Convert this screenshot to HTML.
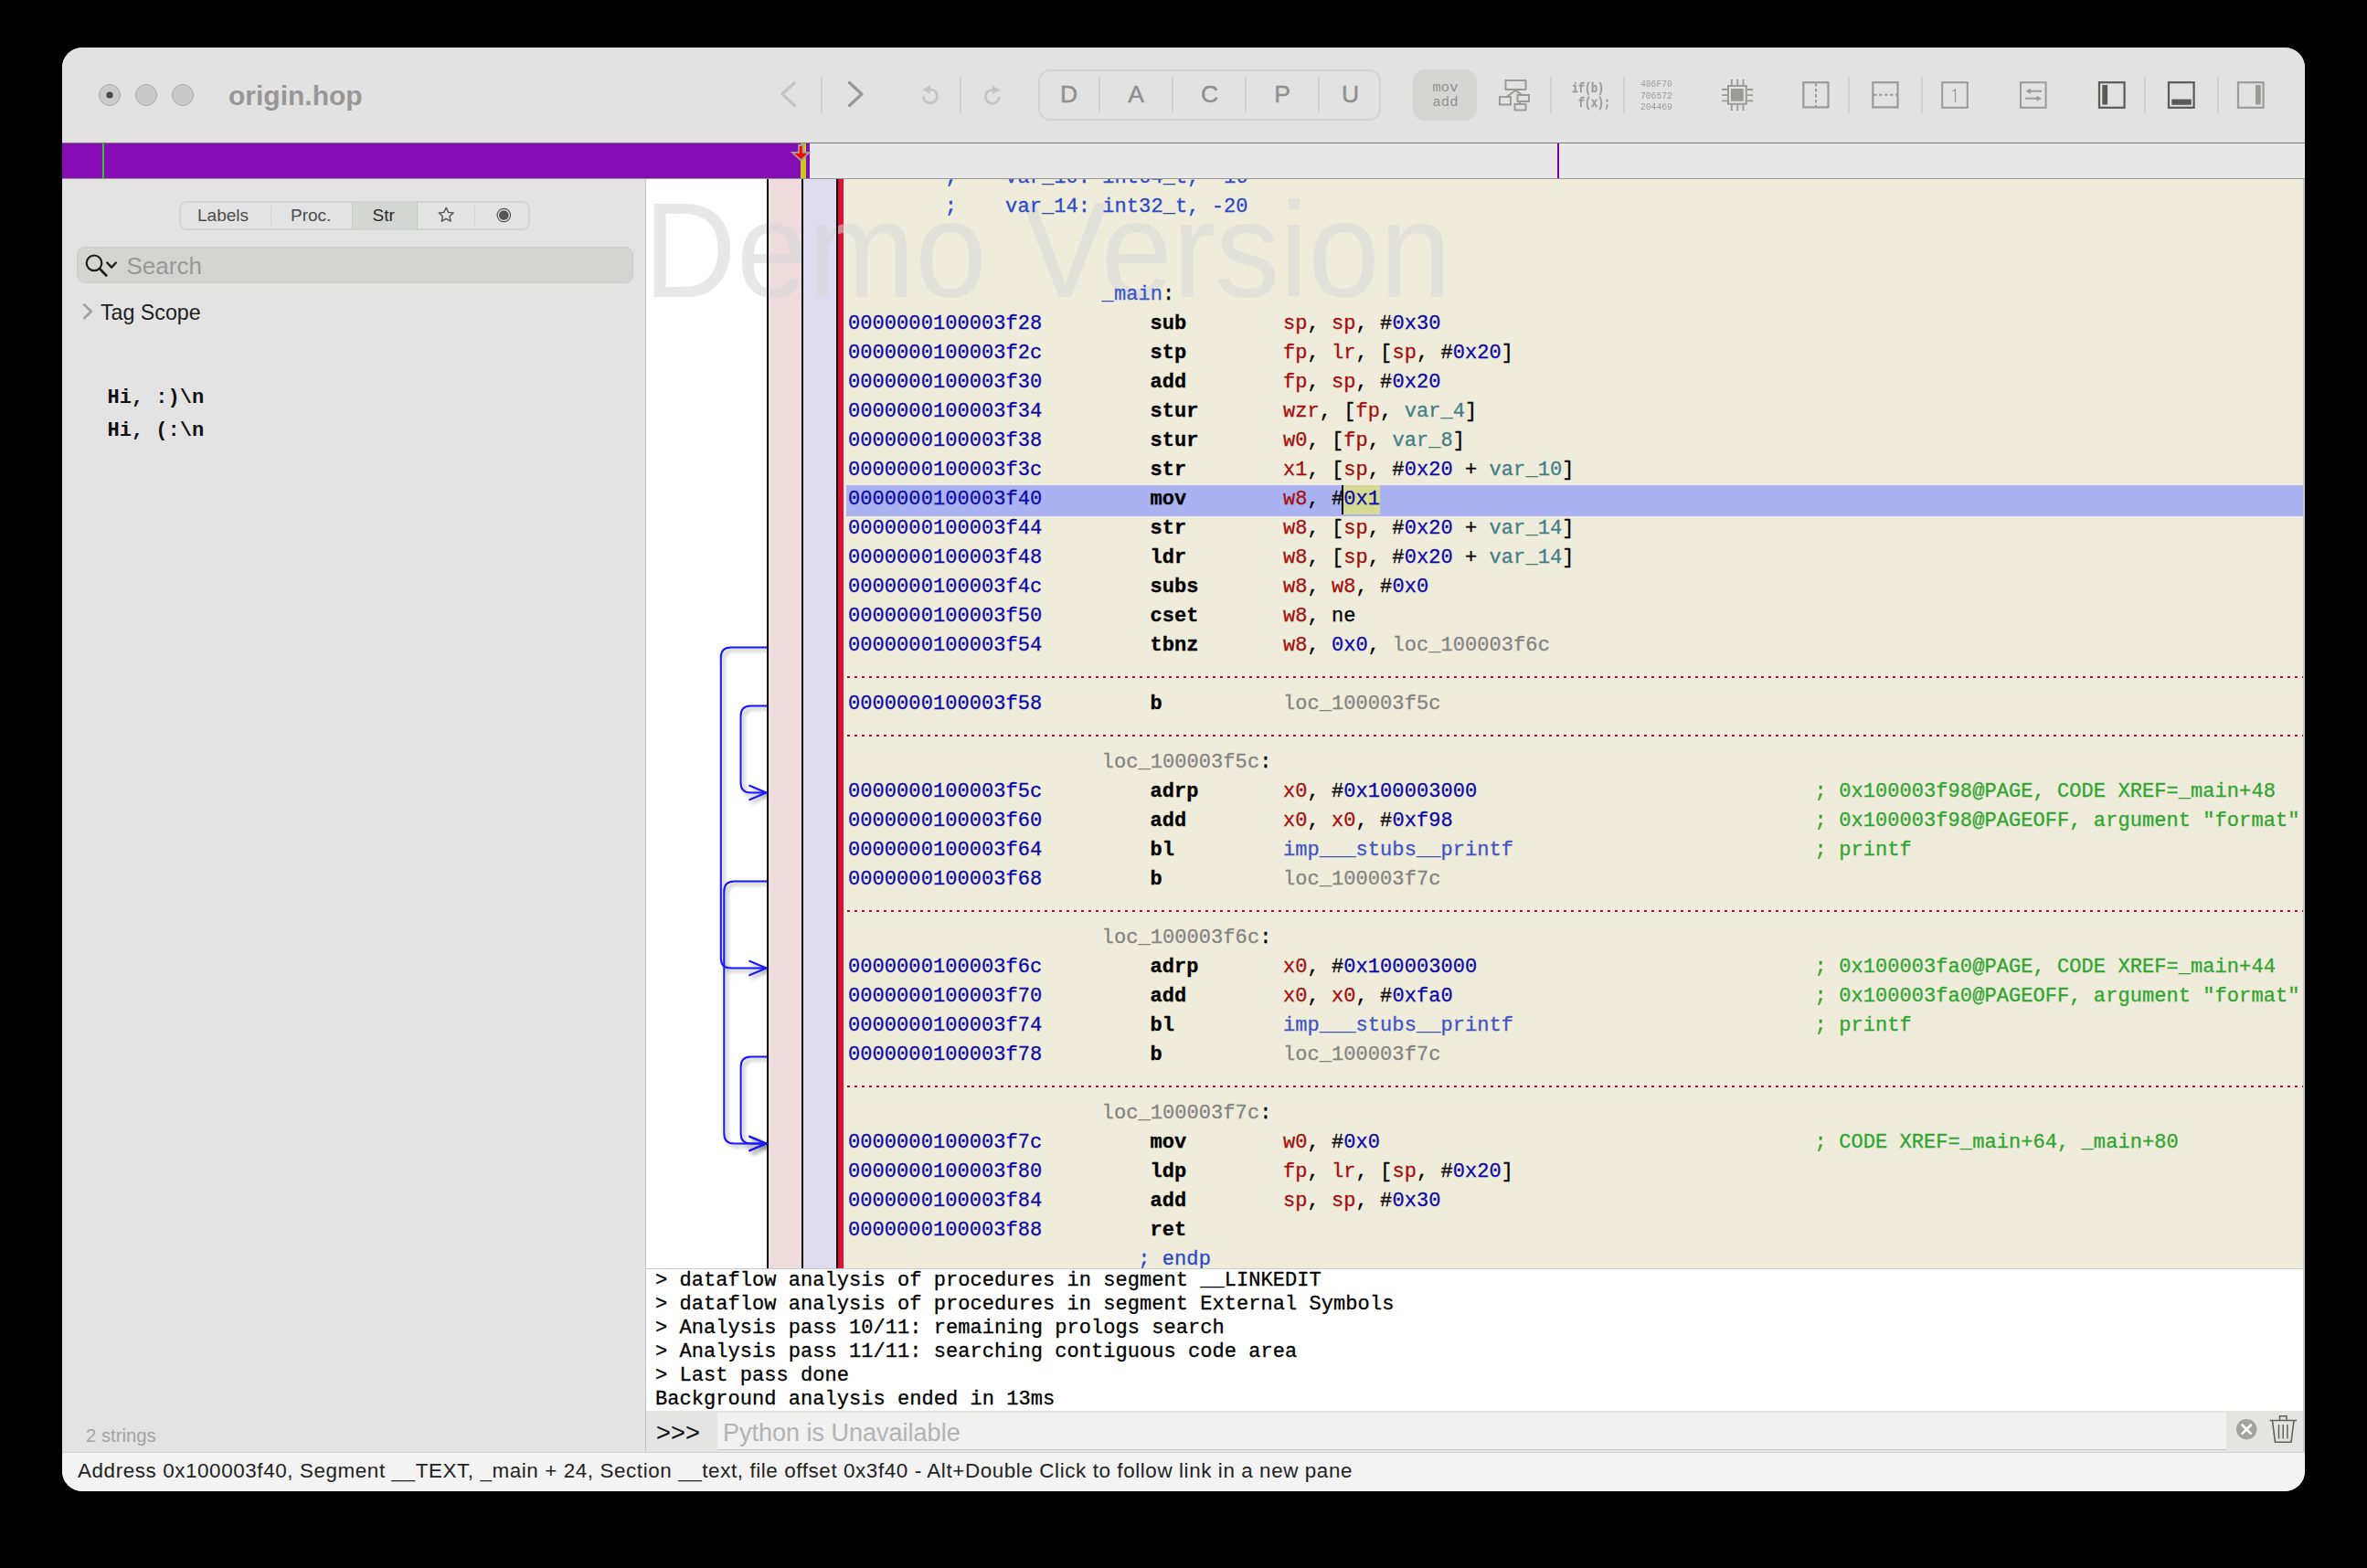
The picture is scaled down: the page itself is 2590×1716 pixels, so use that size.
<!DOCTYPE html><html><head><meta charset="utf-8"><style>
*{margin:0;padding:0;box-sizing:border-box}
html,body{width:2590px;height:1716px;background:#000;overflow:hidden;font-family:"Liberation Sans",sans-serif}
.abs{position:absolute}
#win{position:absolute;left:68px;top:52px;width:2454px;height:1580px;border-radius:22px;overflow:hidden;background:#e3e3e3}
#tb{position:absolute;left:0;top:0;width:2454px;height:105px;background:#e2e2e2;border-bottom:1px solid #767676}
#scrub{position:absolute;left:0;top:105px;width:2454px;height:39px;background:#e8e8e8;border-bottom:1px solid #959595}
#side{position:absolute;left:0;top:144px;width:639px;height:1392px;background:#e3e3e3;border-right:1px solid #c4c4c4}
#code{position:absolute;left:639px;top:144px;width:1814px;height:1193px;background:#efecdc;overflow:hidden;border-bottom:1px solid #c9c9c9}
#gut{position:absolute;left:0;top:0;width:132px;height:1192px;background:#fff}
.cl{position:absolute;white-space:pre;font-family:"Liberation Mono",monospace;font-size:22px;line-height:32px;height:32px;color:#000;letter-spacing:0.07px;-webkit-text-stroke:0.3px currentColor}
.dots{position:absolute;left:4px;right:0;height:2px;background-image:linear-gradient(to right,#9c0f4c 0,#9c0f4c 3px,transparent 3px);background-size:8px 2px}
#con{position:absolute;left:639px;top:1337px;width:1814px;height:155px;background:#fff}
.co{position:absolute;left:10px;white-space:pre;font-family:"Liberation Mono",monospace;font-size:22px;line-height:26px;color:#000;letter-spacing:0.05px;-webkit-text-stroke:0.3px #000}
#inbar{position:absolute;left:639px;top:1492px;width:1814px;height:44px;background:#e4e5e3}
#status{position:absolute;left:0;top:1537px;width:2454px;height:43px;background:#f3f3f3;border-top:1px solid #d2d2d2}
.sep{position:absolute;width:2px;background:#d0d0d0}
.sel{background:#d5d993;box-shadow:-2px 0 0 #000;display:inline-block;height:32px}
</style></head><body>
<div id="win">
<div id="tb">
</div>
<div id="scrub"><div class="abs" style="left:0;top:0;width:818px;height:38px;background:#860db4"></div><div class="abs" style="left:44px;top:0;width:2px;height:38px;background:#36c236"></div><div class="abs" style="left:808px;top:0;width:6px;height:38px;background:#c8c820"></div><div class="abs" style="left:1636px;top:0;width:2px;height:38px;background:#7a00b0"></div></div>
<div id="side">
</div>
<div id="code"><div id="gut"></div>
<div class="abs" style="left:132px;top:0;width:2px;height:1192px;background:#000"></div>
<div class="abs" style="left:134px;top:0;width:36px;height:1192px;background:#eedcdc"></div>
<div class="abs" style="left:170px;top:0;width:2px;height:1192px;background:#000"></div>
<div class="abs" style="left:172px;top:0;width:36px;height:1192px;background:#e0dcf0"></div>
<div class="abs" style="left:208px;top:0;width:2px;height:1192px;background:#000"></div>
<div class="abs" style="left:210px;top:0;width:6px;height:1192px;background:#e00f35"></div>
<div style="position:absolute;left:-3.50px;top:4.19px;font-family:'Liberation Sans',sans-serif;font-size:148px;line-height:1;white-space:pre;color:rgba(214,214,214,0.56);transform:scaleX(0.951);transform-origin:0 0">Demo Version</div>
<div class="abs" style="left:132px;top:0;width:2px;height:1193px;background:#000;opacity:0.9"></div>
<div class="abs" style="left:170px;top:0;width:2px;height:1193px;background:#000;opacity:0.9"></div>
<div class="abs" style="left:208px;top:0;width:2px;height:1193px;background:#000;opacity:0.9"></div>
<div class="abs" style="left:216px;top:0;right:0;bottom:0">
<div class="abs" style="left:3px;right:0;top:335px;height:34px;background:#abb2f1"></div>
<div class="dots" style="top:544px"></div>
<div class="dots" style="top:608px"></div>
<div class="dots" style="top:800px"></div>
<div class="dots" style="top:992px"></div>
<div class="cl" style="top:-17px;left:110.76px"><span style="color:#2a4ac6">;    var_10: int64_t, -16</span></div>
<div class="cl" style="top:15px;left:110.76px"><span style="color:#2a4ac6">;    var_14: int32_t, -20</span></div>
<div class="cl" style="top:111px;left:282.62px"><span style="color:#3a55c8">_main</span>:</div>
<div class="cl" style="top:143px;left:5.00px"><span style="color:#0a0aa6">0000000100003f28</span></div>
<div class="cl" style="top:143px;left:335.50px"><span style="font-weight:bold">sub</span></div>
<div class="cl" style="top:143px;left:480.92px"><span style="color:#a50d0d">sp</span>, <span style="color:#a50d0d">sp</span>, #<span style="color:#0a0aa6">0x30</span></div>
<div class="cl" style="top:175px;left:5.00px"><span style="color:#0a0aa6">0000000100003f2c</span></div>
<div class="cl" style="top:175px;left:335.50px"><span style="font-weight:bold">stp</span></div>
<div class="cl" style="top:175px;left:480.92px"><span style="color:#a50d0d">fp</span>, <span style="color:#a50d0d">lr</span>, [<span style="color:#a50d0d">sp</span>, #<span style="color:#0a0aa6">0x20</span>]</div>
<div class="cl" style="top:207px;left:5.00px"><span style="color:#0a0aa6">0000000100003f30</span></div>
<div class="cl" style="top:207px;left:335.50px"><span style="font-weight:bold">add</span></div>
<div class="cl" style="top:207px;left:480.92px"><span style="color:#a50d0d">fp</span>, <span style="color:#a50d0d">sp</span>, #<span style="color:#0a0aa6">0x20</span></div>
<div class="cl" style="top:239px;left:5.00px"><span style="color:#0a0aa6">0000000100003f34</span></div>
<div class="cl" style="top:239px;left:335.50px"><span style="font-weight:bold">stur</span></div>
<div class="cl" style="top:239px;left:480.92px"><span style="color:#a50d0d">wzr</span>, [<span style="color:#a50d0d">fp</span>, <span style="color:#417e86">var_4</span>]</div>
<div class="cl" style="top:271px;left:5.00px"><span style="color:#0a0aa6">0000000100003f38</span></div>
<div class="cl" style="top:271px;left:335.50px"><span style="font-weight:bold">stur</span></div>
<div class="cl" style="top:271px;left:480.92px"><span style="color:#a50d0d">w0</span>, [<span style="color:#a50d0d">fp</span>, <span style="color:#417e86">var_8</span>]</div>
<div class="cl" style="top:303px;left:5.00px"><span style="color:#0a0aa6">0000000100003f3c</span></div>
<div class="cl" style="top:303px;left:335.50px"><span style="font-weight:bold">str</span></div>
<div class="cl" style="top:303px;left:480.92px"><span style="color:#a50d0d">x1</span>, [<span style="color:#a50d0d">sp</span>, #<span style="color:#0a0aa6">0x20</span> + <span style="color:#417e86">var_10</span>]</div>
<div class="cl" style="top:335px;left:5.00px"><span style="color:#0a0aa6">0000000100003f40</span></div>
<div class="cl" style="top:335px;left:335.50px"><span style="font-weight:bold">mov</span></div>
<div class="cl" style="top:335px;left:480.92px"><span style="color:#a50d0d">w8</span>, #<span class="sel"><span style="color:#0a0aa6">0x1</span></span></div>
<div class="cl" style="top:367px;left:5.00px"><span style="color:#0a0aa6">0000000100003f44</span></div>
<div class="cl" style="top:367px;left:335.50px"><span style="font-weight:bold">str</span></div>
<div class="cl" style="top:367px;left:480.92px"><span style="color:#a50d0d">w8</span>, [<span style="color:#a50d0d">sp</span>, #<span style="color:#0a0aa6">0x20</span> + <span style="color:#417e86">var_14</span>]</div>
<div class="cl" style="top:399px;left:5.00px"><span style="color:#0a0aa6">0000000100003f48</span></div>
<div class="cl" style="top:399px;left:335.50px"><span style="font-weight:bold">ldr</span></div>
<div class="cl" style="top:399px;left:480.92px"><span style="color:#a50d0d">w8</span>, [<span style="color:#a50d0d">sp</span>, #<span style="color:#0a0aa6">0x20</span> + <span style="color:#417e86">var_14</span>]</div>
<div class="cl" style="top:431px;left:5.00px"><span style="color:#0a0aa6">0000000100003f4c</span></div>
<div class="cl" style="top:431px;left:335.50px"><span style="font-weight:bold">subs</span></div>
<div class="cl" style="top:431px;left:480.92px"><span style="color:#a50d0d">w8</span>, <span style="color:#a50d0d">w8</span>, #<span style="color:#0a0aa6">0x0</span></div>
<div class="cl" style="top:463px;left:5.00px"><span style="color:#0a0aa6">0000000100003f50</span></div>
<div class="cl" style="top:463px;left:335.50px"><span style="font-weight:bold">cset</span></div>
<div class="cl" style="top:463px;left:480.92px"><span style="color:#a50d0d">w8</span>, ne</div>
<div class="cl" style="top:495px;left:5.00px"><span style="color:#0a0aa6">0000000100003f54</span></div>
<div class="cl" style="top:495px;left:335.50px"><span style="font-weight:bold">tbnz</span></div>
<div class="cl" style="top:495px;left:480.92px"><span style="color:#a50d0d">w8</span>, <span style="color:#0a0aa6">0x0</span>, <span style="color:#838383">loc_100003f6c</span></div>
<div class="cl" style="top:559px;left:5.00px"><span style="color:#0a0aa6">0000000100003f58</span></div>
<div class="cl" style="top:559px;left:335.50px"><span style="font-weight:bold">b</span></div>
<div class="cl" style="top:559px;left:480.92px"><span style="color:#838383">loc_100003f5c</span></div>
<div class="cl" style="top:623px;left:282.62px"><span style="color:#838383">loc_100003f5c</span>:</div>
<div class="cl" style="top:655px;left:5.00px"><span style="color:#0a0aa6">0000000100003f5c</span></div>
<div class="cl" style="top:655px;left:335.50px"><span style="font-weight:bold">adrp</span></div>
<div class="cl" style="top:655px;left:480.92px"><span style="color:#a50d0d">x0</span>, #<span style="color:#0a0aa6">0x100003000</span></div>
<div class="cl" style="top:655px;left:1062.60px"><span style="color:#2fa52f">; 0x100003f98@PAGE, CODE XREF=_main+48</span></div>
<div class="cl" style="top:687px;left:5.00px"><span style="color:#0a0aa6">0000000100003f60</span></div>
<div class="cl" style="top:687px;left:335.50px"><span style="font-weight:bold">add</span></div>
<div class="cl" style="top:687px;left:480.92px"><span style="color:#a50d0d">x0</span>, <span style="color:#a50d0d">x0</span>, #<span style="color:#0a0aa6">0xf98</span></div>
<div class="cl" style="top:687px;left:1062.60px"><span style="color:#2fa52f">; 0x100003f98@PAGEOFF, argument &quot;format&quot;</span></div>
<div class="cl" style="top:719px;left:5.00px"><span style="color:#0a0aa6">0000000100003f64</span></div>
<div class="cl" style="top:719px;left:335.50px"><span style="font-weight:bold">bl</span></div>
<div class="cl" style="top:719px;left:480.92px"><span style="color:#3f55c3">imp___stubs__printf</span></div>
<div class="cl" style="top:719px;left:1062.60px"><span style="color:#2fa52f">; printf</span></div>
<div class="cl" style="top:751px;left:5.00px"><span style="color:#0a0aa6">0000000100003f68</span></div>
<div class="cl" style="top:751px;left:335.50px"><span style="font-weight:bold">b</span></div>
<div class="cl" style="top:751px;left:480.92px"><span style="color:#838383">loc_100003f7c</span></div>
<div class="cl" style="top:815px;left:282.62px"><span style="color:#838383">loc_100003f6c</span>:</div>
<div class="cl" style="top:847px;left:5.00px"><span style="color:#0a0aa6">0000000100003f6c</span></div>
<div class="cl" style="top:847px;left:335.50px"><span style="font-weight:bold">adrp</span></div>
<div class="cl" style="top:847px;left:480.92px"><span style="color:#a50d0d">x0</span>, #<span style="color:#0a0aa6">0x100003000</span></div>
<div class="cl" style="top:847px;left:1062.60px"><span style="color:#2fa52f">; 0x100003fa0@PAGE, CODE XREF=_main+44</span></div>
<div class="cl" style="top:879px;left:5.00px"><span style="color:#0a0aa6">0000000100003f70</span></div>
<div class="cl" style="top:879px;left:335.50px"><span style="font-weight:bold">add</span></div>
<div class="cl" style="top:879px;left:480.92px"><span style="color:#a50d0d">x0</span>, <span style="color:#a50d0d">x0</span>, #<span style="color:#0a0aa6">0xfa0</span></div>
<div class="cl" style="top:879px;left:1062.60px"><span style="color:#2fa52f">; 0x100003fa0@PAGEOFF, argument &quot;format&quot;</span></div>
<div class="cl" style="top:911px;left:5.00px"><span style="color:#0a0aa6">0000000100003f74</span></div>
<div class="cl" style="top:911px;left:335.50px"><span style="font-weight:bold">bl</span></div>
<div class="cl" style="top:911px;left:480.92px"><span style="color:#3f55c3">imp___stubs__printf</span></div>
<div class="cl" style="top:911px;left:1062.60px"><span style="color:#2fa52f">; printf</span></div>
<div class="cl" style="top:943px;left:5.00px"><span style="color:#0a0aa6">0000000100003f78</span></div>
<div class="cl" style="top:943px;left:335.50px"><span style="font-weight:bold">b</span></div>
<div class="cl" style="top:943px;left:480.92px"><span style="color:#838383">loc_100003f7c</span></div>
<div class="cl" style="top:1007px;left:282.62px"><span style="color:#838383">loc_100003f7c</span>:</div>
<div class="cl" style="top:1039px;left:5.00px"><span style="color:#0a0aa6">0000000100003f7c</span></div>
<div class="cl" style="top:1039px;left:335.50px"><span style="font-weight:bold">mov</span></div>
<div class="cl" style="top:1039px;left:480.92px"><span style="color:#a50d0d">w0</span>, #<span style="color:#0a0aa6">0x0</span></div>
<div class="cl" style="top:1039px;left:1062.60px"><span style="color:#2fa52f">; CODE XREF=_main+64, _main+80</span></div>
<div class="cl" style="top:1071px;left:5.00px"><span style="color:#0a0aa6">0000000100003f80</span></div>
<div class="cl" style="top:1071px;left:335.50px"><span style="font-weight:bold">ldp</span></div>
<div class="cl" style="top:1071px;left:480.92px"><span style="color:#a50d0d">fp</span>, <span style="color:#a50d0d">lr</span>, [<span style="color:#a50d0d">sp</span>, #<span style="color:#0a0aa6">0x20</span>]</div>
<div class="cl" style="top:1103px;left:5.00px"><span style="color:#0a0aa6">0000000100003f84</span></div>
<div class="cl" style="top:1103px;left:335.50px"><span style="font-weight:bold">add</span></div>
<div class="cl" style="top:1103px;left:480.92px"><span style="color:#a50d0d">sp</span>, <span style="color:#a50d0d">sp</span>, #<span style="color:#0a0aa6">0x30</span></div>
<div class="cl" style="top:1135px;left:5.00px"><span style="color:#0a0aa6">0000000100003f88</span></div>
<div class="cl" style="top:1135px;left:335.50px"><span style="font-weight:bold">ret</span></div>
<div class="cl" style="top:1167px;left:322.28px"><span style="color:#2a4ac6">; endp</span></div>
</div>
</div>
<div id="con">
<div class="co" style="top:0px">&gt; dataflow analysis of procedures in segment __LINKEDIT</div>
<div class="co" style="top:26px">&gt; dataflow analysis of procedures in segment External Symbols</div>
<div class="co" style="top:52px">&gt; Analysis pass 10/11: remaining prologs search</div>
<div class="co" style="top:78px">&gt; Analysis pass 11/11: searching contiguous code area</div>
<div class="co" style="top:104px">&gt; Last pass done</div>
<div class="co" style="top:130px">Background analysis ended in 13ms</div>
</div>
<div id="inbar"></div>
<div id="status"></div>
<svg style="position:absolute;left:39.00px;top:39.00px;" width="26.00" height="26.00" viewBox="107.00 91.00 26.00 26.00"><circle cx="120" cy="104" r="11.6" fill="#c9c9c9" stroke="#a9a9a9" stroke-width="1"/><circle cx="120" cy="104" r="3.6" fill="#454545"/></svg>
<svg style="position:absolute;left:79.00px;top:39.00px;" width="26.00" height="26.00" viewBox="147.00 91.00 26.00 26.00"><circle cx="160" cy="104" r="11.6" fill="#c9c9c9" stroke="#a9a9a9" stroke-width="1"/></svg>
<svg style="position:absolute;left:119.00px;top:39.00px;" width="26.00" height="26.00" viewBox="187.00 91.00 26.00 26.00"><circle cx="200" cy="104" r="11.6" fill="#c9c9c9" stroke="#a9a9a9" stroke-width="1"/></svg>
<div style="position:absolute;left:182.00px;top:37.60px;font-family:'Liberation Sans',sans-serif;font-size:30.00px;line-height:1;white-space:pre;color:#979797;font-weight:bold;">origin.hop</div>
<svg style="position:absolute;left:777.00px;top:28.00px;" width="35.00" height="46.00" viewBox="845.00 80.00 35.00 46.00"><polyline points="869.5,90.5 856,103 869.5,115.5" fill="none" stroke="#c5c5c5" stroke-width="3.3" stroke-linecap="round" stroke-linejoin="round"/></svg>
<svg style="position:absolute;left:850.00px;top:28.00px;" width="37.00" height="46.00" viewBox="918.00 80.00 37.00 46.00"><polyline points="929.5,90.5 943,103 929.5,115.5" fill="none" stroke="#979996" stroke-width="3.3" stroke-linecap="round" stroke-linejoin="round"/></svg>
<div style="position:absolute;left:830.25px;top:32.00px;width:1.50px;height:40.00px;background:#d2d2d2"></div>
<div style="position:absolute;left:982.25px;top:32.00px;width:1.50px;height:40.00px;background:#d2d2d2"></div>
<div style="position:absolute;left:1628.25px;top:32.00px;width:1.50px;height:40.00px;background:#d2d2d2"></div>
<div style="position:absolute;left:1708.25px;top:32.00px;width:1.50px;height:40.00px;background:#d2d2d2"></div>
<div style="position:absolute;left:1954.25px;top:32.00px;width:1.50px;height:40.00px;background:#d2d2d2"></div>
<div style="position:absolute;left:2034.25px;top:32.00px;width:1.50px;height:40.00px;background:#d2d2d2"></div>
<div style="position:absolute;left:2278.25px;top:32.00px;width:1.50px;height:40.00px;background:#d2d2d2"></div>
<div style="position:absolute;left:2358.25px;top:32.00px;width:1.50px;height:40.00px;background:#d2d2d2"></div>
<svg style="position:absolute;left:932.00px;top:34.00px;" width="36.00" height="38.00" viewBox="1000.00 86.00 36.00 38.00"><path d="M1010.4,105.3 A7.5,7.5 0 1 0 1017.9,97.9" fill="none" stroke="#c5c5c5" stroke-width="2.8"/><path d="M1009.6,97.9 L1017.9,93 L1017.9,102.8 Z" fill="#c5c5c5"/></svg>
<svg style="position:absolute;left:1000.00px;top:34.00px;" width="36.00" height="38.00" viewBox="1068.00 86.00 36.00 38.00"><path d="M1093.3,105.8 A7.5,7.5 0 1 1 1085.8,98.4" fill="none" stroke="#c5c5c5" stroke-width="2.8"/><path d="M1094.2,98.4 L1085.8,93.6 L1085.8,103.2 Z" fill="#c5c5c5"/></svg>
<div style="position:absolute;left:1068.00px;top:24.00px;width:375.00px;height:55.50px;border:2px solid #d3d4d2;border-radius:13px;box-sizing:border-box"></div>
<div style="position:absolute;left:1134.25px;top:32.00px;width:1.50px;height:39.00px;background:#d2d3d1"></div>
<div style="position:absolute;left:1214.25px;top:32.00px;width:1.50px;height:39.00px;background:#d2d3d1"></div>
<div style="position:absolute;left:1294.25px;top:32.00px;width:1.50px;height:39.00px;background:#d2d3d1"></div>
<div style="position:absolute;left:1374.25px;top:32.00px;width:1.50px;height:39.00px;background:#d2d3d1"></div>
<div style="position:absolute;left:1071.50px;top:37.76px;width:60px;text-align:center;font-family:'Liberation Sans',sans-serif;font-size:26.5px;line-height:1;color:#8f908e;-webkit-text-stroke:0.45px #8f908e">D</div>
<div style="position:absolute;left:1145.00px;top:37.76px;width:60px;text-align:center;font-family:'Liberation Sans',sans-serif;font-size:26.5px;line-height:1;color:#8f908e;-webkit-text-stroke:0.45px #8f908e">A</div>
<div style="position:absolute;left:1225.50px;top:37.76px;width:60px;text-align:center;font-family:'Liberation Sans',sans-serif;font-size:26.5px;line-height:1;color:#8f908e;-webkit-text-stroke:0.45px #8f908e">C</div>
<div style="position:absolute;left:1305.00px;top:37.76px;width:60px;text-align:center;font-family:'Liberation Sans',sans-serif;font-size:26.5px;line-height:1;color:#8f908e;-webkit-text-stroke:0.45px #8f908e">P</div>
<div style="position:absolute;left:1379.50px;top:37.76px;width:60px;text-align:center;font-family:'Liberation Sans',sans-serif;font-size:26.5px;line-height:1;color:#8f908e;-webkit-text-stroke:0.45px #8f908e">U</div>
<div style="position:absolute;left:1478.00px;top:24.00px;width:70.00px;height:55.50px;background:#d5d6d4;border-radius:13px"></div>
<div style="position:absolute;left:1478.50px;top:36.00px;width:70px;text-align:center;font-family:'Liberation Mono',monospace;font-size:15.5px;line-height:16px;color:#8f908e">mov<br>add</div>
<svg style="position:absolute;left:1568.00px;top:30.00px;" width="44.00" height="42.00" viewBox="1636.00 82.00 44.00 42.00"><rect x="1647.5" y="88" width="22" height="10" fill="none" stroke="#9a9b99" stroke-width="2"/><rect x="1641" y="106" width="12" height="8.5" fill="none" stroke="#9a9b99" stroke-width="2"/><rect x="1660.5" y="104" width="12.5" height="7" fill="none" stroke="#9a9b99" stroke-width="2"/><rect x="1657.5" y="114" width="12" height="6.5" fill="none" stroke="#9a9b99" stroke-width="2"/><polyline points="1648.5,106 1658,99 1666,104" fill="none" stroke="#9a9b99" stroke-width="2"/><line x1="1663" y1="111" x2="1663" y2="114" stroke="#9a9b99" stroke-width="2"/></svg>
<div style="position:absolute;left:1651.50px;top:38.00px;font-family:'Liberation Mono',monospace;font-weight:bold;font-size:15px;line-height:15.5px;color:#9a9b99;white-space:pre;-webkit-text-stroke:0.35px #9a9b99;transform:scaleX(0.78);transform-origin:0 0">if(b)<br> f(x);</div>
<div style="position:absolute;left:1727.00px;top:34.20px;font-family:'Liberation Mono',monospace;font-size:11px;line-height:12.4px;color:#9c9d9b;white-space:pre;transform:scaleX(0.88);transform-origin:0 0">486F70<br>706572<br>204469</div>
<svg style="position:absolute;left:1812.00px;top:32.00px;" width="42.00" height="40.00" viewBox="1880.00 84.00 42.00 40.00"><rect x="1891" y="94" width="19.8" height="19.8" fill="none" stroke="#9a9b99" stroke-width="2"/><rect x="1894" y="97" width="13.8" height="13.8" fill="#9a9b99"/><line x1="1894.8" y1="86.8" x2="1894.8" y2="93" stroke="#9a9b99" stroke-width="1.8"/><line x1="1894.8" y1="115" x2="1894.8" y2="121" stroke="#9a9b99" stroke-width="1.8"/><line x1="1901.2" y1="86.8" x2="1901.2" y2="93" stroke="#9a9b99" stroke-width="1.8"/><line x1="1901.2" y1="115" x2="1901.2" y2="121" stroke="#9a9b99" stroke-width="1.8"/><line x1="1907.5" y1="86.8" x2="1907.5" y2="93" stroke="#9a9b99" stroke-width="1.8"/><line x1="1907.5" y1="115" x2="1907.5" y2="121" stroke="#9a9b99" stroke-width="1.8"/><line y1="98.0" x1="1884" y2="98.0" x2="1891" stroke="#9a9b99" stroke-width="1.8"/><line y1="98.0" x1="1912" y2="98.0" x2="1918" stroke="#9a9b99" stroke-width="1.8"/><line y1="104.2" x1="1884" y2="104.2" x2="1891" stroke="#9a9b99" stroke-width="1.8"/><line y1="104.2" x1="1912" y2="104.2" x2="1918" stroke="#9a9b99" stroke-width="1.8"/><line y1="110.4" x1="1884" y2="110.4" x2="1891" stroke="#9a9b99" stroke-width="1.8"/><line y1="110.4" x1="1912" y2="110.4" x2="1918" stroke="#9a9b99" stroke-width="1.8"/></svg>
<svg style="position:absolute;left:1900.00px;top:33.00px;" width="38.00" height="37.00" viewBox="1968.00 85.00 38.00 37.00"><rect x="1973.3" y="90.2" width="27.2" height="27.2" fill="none" stroke="#9a9b99" stroke-width="2.2"/><line x1="1987" y1="91" x2="1987" y2="117" stroke="#9a9b99" stroke-width="2" stroke-dasharray="3.5,2.5"/></svg>
<svg style="position:absolute;left:1976.00px;top:33.00px;" width="38.00" height="37.00" viewBox="2044.00 85.00 38.00 37.00"><rect x="2049.3" y="90.2" width="27.2" height="27.2" fill="none" stroke="#9a9b99" stroke-width="2.2"/><line x1="2050" y1="103.7" x2="2076" y2="103.7" stroke="#9a9b99" stroke-width="2" stroke-dasharray="3.5,2.5"/></svg>
<svg style="position:absolute;left:2052.00px;top:33.00px;" width="38.00" height="38.00" viewBox="2120.00 85.00 38.00 38.00"><rect x="2125.2" y="90.2" width="27.6" height="27.6" fill="none" stroke="#9a9b99" stroke-width="2"/><path d="M2136.5,100 L2139.5,98 L2139.5,112" fill="none" stroke="#9a9b99" stroke-width="1.3"/></svg>
<svg style="position:absolute;left:2138.00px;top:33.00px;" width="38.00" height="38.00" viewBox="2206.00 85.00 38.00 38.00"><rect x="2211" y="90.2" width="27.6" height="27.6" fill="none" stroke="#9a9b99" stroke-width="2"/><line x1="2219" y1="99.7" x2="2234" y2="99.7" stroke="#9a9b99" stroke-width="2"/><path d="M2216.5,99.7 L2222,96.7 L2222,102.7 Z" fill="#9a9b99"/><line x1="2216" y1="107.7" x2="2231" y2="107.7" stroke="#9a9b99" stroke-width="2"/><path d="M2234,107.7 L2228.5,104.7 L2228.5,110.7 Z" fill="#9a9b99"/></svg>
<svg style="position:absolute;left:2224.00px;top:33.00px;" width="38.00" height="38.00" viewBox="2292.00 85.00 38.00 38.00"><rect x="2297" y="90.2" width="27.6" height="27.6" fill="none" stroke="#5a5b59" stroke-width="2.2"/><rect x="2300.3" y="93" width="5.8" height="21.5" fill="#5a5b59"/></svg>
<svg style="position:absolute;left:2300.00px;top:33.00px;" width="38.00" height="38.00" viewBox="2368.00 85.00 38.00 38.00"><rect x="2373" y="90.2" width="27.6" height="27.6" fill="none" stroke="#5a5b59" stroke-width="2.2"/><rect x="2376.3" y="108.6" width="21.5" height="6.2" fill="#5a5b59"/></svg>
<svg style="position:absolute;left:2376.00px;top:33.00px;" width="38.00" height="38.00" viewBox="2444.00 85.00 38.00 38.00"><rect x="2449" y="90.2" width="27.6" height="27.6" fill="none" stroke="#9a9b99" stroke-width="2.2"/><rect x="2468" y="93" width="5.8" height="21.5" fill="#9a9b99"/></svg>
<div style="position:absolute;left:127.50px;top:168.00px;width:384.50px;height:32.00px;border:2px solid #d3d5d3;border-radius:8px;box-sizing:border-box"></div>
<div style="position:absolute;left:316.50px;top:168.00px;width:72.50px;height:32.00px;background:#d4d6d4;border-left:1.5px solid #c8cac8;border-right:1.5px solid #c8cac8;box-sizing:border-box"></div>
<div style="position:absolute;left:227.60px;top:174.00px;width:1.40px;height:20.00px;background:#d3d4d2"></div>
<div style="position:absolute;left:451.10px;top:174.00px;width:1.40px;height:20.00px;background:#d3d4d2"></div>
<div style="position:absolute;left:148.00px;top:173.91px;font-family:'Liberation Sans',sans-serif;font-size:19.00px;line-height:1;white-space:pre;color:#4c4c4c;font-weight:normal;">Labels</div>
<div style="position:absolute;left:250.00px;top:173.91px;font-family:'Liberation Sans',sans-serif;font-size:19.00px;line-height:1;white-space:pre;color:#4c4c4c;font-weight:normal;">Proc.</div>
<div style="position:absolute;left:339.50px;top:173.91px;font-family:'Liberation Sans',sans-serif;font-size:19.00px;line-height:1;white-space:pre;color:#2a2a2a;font-weight:normal;">Str</div>
<svg style="position:absolute;left:408.00px;top:171.00px;" width="24.00" height="25.00" viewBox="476.00 223.00 24.00 25.00"><path d="M488.2,227.3 L490.6,232.4 L496.1,233 L492,236.7 L493.1,242.1 L488.2,239.4 L483.3,242.1 L484.4,236.7 L480.3,233 L485.8,232.4 Z" fill="none" stroke="#555" stroke-width="1.4" stroke-linejoin="round"/></svg>
<svg style="position:absolute;left:472.00px;top:172.00px;" width="23.00" height="23.00" viewBox="540.00 224.00 23.00 23.00"><circle cx="551.3" cy="235.5" r="7.2" fill="none" stroke="#555" stroke-width="1.2"/><circle cx="551.3" cy="235.5" r="5.3" fill="#555"/></svg>
<div style="position:absolute;left:16.30px;top:218.30px;width:608.70px;height:39.40px;background:#d4d5d3;border-radius:9px;border:1px solid #cbccca;box-sizing:border-box"></div>
<svg style="position:absolute;left:20.00px;top:222.00px;" width="44.00" height="34.00" viewBox="88.00 274.00 44.00 34.00"><circle cx="103" cy="287.8" r="8.3" fill="none" stroke="#1c1c1c" stroke-width="2.2"/><line x1="109" y1="294" x2="116.3" y2="301.5" stroke="#1c1c1c" stroke-width="2.6" stroke-linecap="round"/><polyline points="117.3,287.5 122,292.6 126.9,287.5" fill="none" stroke="#1c1c1c" stroke-width="2.3" stroke-linecap="round" stroke-linejoin="round"/></svg>
<div style="position:absolute;left:70.50px;top:226.49px;font-family:'Liberation Sans',sans-serif;font-size:26.00px;line-height:1;white-space:pre;color:#989898;font-weight:normal;">Search</div>
<svg style="position:absolute;left:18.00px;top:276.00px;" width="20.00" height="25.00" viewBox="86.00 328.00 20.00 25.00"><polyline points="92.3,333.5 99.8,340.7 92.3,348" fill="none" stroke="#a0a39f" stroke-width="2.8" stroke-linecap="round" stroke-linejoin="round"/></svg>
<div style="position:absolute;left:42.00px;top:279.06px;font-family:'Liberation Sans',sans-serif;font-size:23.20px;line-height:1;white-space:pre;color:#1e1e1e;font-weight:normal;">Tag Scope</div>
<div style="position:absolute;left:49.50px;top:373.15px;font-family:'Liberation Mono',monospace;font-size:22.00px;line-height:1;white-space:pre;color:#111;font-weight:bold;">Hi, :)\n</div>
<div style="position:absolute;left:49.50px;top:409.15px;font-family:'Liberation Mono',monospace;font-size:22.00px;line-height:1;white-space:pre;color:#111;font-weight:bold;">Hi, (:\n</div>
<div style="position:absolute;left:26.00px;top:1509.21px;font-family:'Liberation Sans',sans-serif;font-size:20.30px;line-height:1;white-space:pre;color:#a3a3a3;font-weight:normal;">2 strings</div>
<svg style="position:absolute;left:639.00px;top:144.00px;" width="132.50" height="1192.00" viewBox="707.00 196.00 132.50 1192.00"><defs><filter id="sh" x="-50%" y="-20%" width="200%" height="140%"><feGaussianBlur in="SourceAlpha" stdDeviation="2.2"/><feOffset dx="2.5" dy="2.5"/><feComponentTransfer><feFuncA type="linear" slope="0.35"/></feComponentTransfer><feMerge><feMergeNode/><feMergeNode in="SourceGraphic"/></feMerge></filter></defs><g filter="url(#sh)"><path d="M839.0,708.5 L799.8,708.5 Q788.8,708.5 788.8,719.5 L788.8,1048.5 Q788.8,1059.5 799.8,1059.5 L839.0,1059.5" fill="none" stroke="#1515ff" stroke-width="2"/><polyline points="819.5,1051.5 838.5,1059.5 819.5,1067.5" fill="none" stroke="#1515ff" stroke-width="2"/></g><g filter="url(#sh)"><path d="M839.0,772.5 L821.5,772.5 Q810.5,772.5 810.5,783.5 L810.5,856.5 Q810.5,867.5 821.5,867.5 L839.0,867.5" fill="none" stroke="#1515ff" stroke-width="2"/><polyline points="819.5,859.5 838.5,867.5 819.5,875.5" fill="none" stroke="#1515ff" stroke-width="2"/></g><g filter="url(#sh)"><path d="M839.0,964.5 L803.3,964.5 Q792.3,964.5 792.3,975.5 L792.3,1240.5 Q792.3,1251.5 803.3,1251.5 L839.0,1251.5" fill="none" stroke="#1515ff" stroke-width="2"/><polyline points="819.5,1243.5 838.5,1251.5 819.5,1259.5" fill="none" stroke="#1515ff" stroke-width="2"/></g><g filter="url(#sh)"><path d="M839.0,1156.5 L821.6,1156.5 Q810.6,1156.5 810.6,1167.5 L810.6,1240.5 Q810.6,1251.5 821.6,1251.5 L839.0,1251.5" fill="none" stroke="#1515ff" stroke-width="2"/><polyline points="819.5,1243.5 838.5,1251.5 819.5,1259.5" fill="none" stroke="#1515ff" stroke-width="2"/></g></svg>
<div style="position:absolute;left:2452.30px;top:144.00px;width:1.70px;height:1393.00px;background:#c9c9c9"></div>
<svg style="position:absolute;left:794.00px;top:103.00px;" width="30.00" height="25.00" viewBox="862.00 155.00 30.00 25.00"><path d="M874,159 L878.5,159 L878.5,166.8 L885.5,166.8 L876.3,175.5 L867,166.8 L874,166.8 Z" fill="#ff0000" stroke="#9ca39f" stroke-width="1.8" stroke-linejoin="miter"/></svg>
<div style="position:absolute;left:650.00px;top:1501.89px;font-family:'Liberation Sans',sans-serif;font-size:27.30px;line-height:1;white-space:pre;color:#111;font-weight:normal;">&gt;&gt;&gt;</div>
<div style="position:absolute;left:717.00px;top:1493.50px;width:1651.00px;height:41.50px;background:#f1f1f1;border-bottom:1.5px solid #c6c6c6;box-sizing:border-box"></div>
<div style="position:absolute;left:723.00px;top:1503.14px;font-family:'Liberation Sans',sans-serif;font-size:27.00px;line-height:1;white-space:pre;color:#b3b3b3;font-weight:normal;">Python is Unavailable</div>
<svg style="position:absolute;left:2376.00px;top:1498.00px;" width="28.00" height="28.00" viewBox="2444.00 1550.00 28.00 28.00"><circle cx="2458.2" cy="1564.2" r="11.2" fill="#a1a3a0"/><path d="M2453.5,1559.5 L2462.9,1568.9 M2462.9,1559.5 L2453.5,1568.9" stroke="#fff" stroke-width="2.6" stroke-linecap="round"/></svg>
<svg style="position:absolute;left:2412.00px;top:1494.00px;" width="36.00" height="36.00" viewBox="2480.00 1546.00 36.00 36.00"><path d="M2486,1554.5 L2510,1554.5 M2483.5,1554.5 L2513,1554.5" stroke="#606060" stroke-width="1.6"/><path d="M2494.5,1554 L2494.5,1549.8 L2502,1549.8 L2502,1554" fill="none" stroke="#606060" stroke-width="1.5"/><path d="M2486.5,1555 L2489.5,1578.3 L2507,1578.3 L2510,1555" fill="none" stroke="#606060" stroke-width="1.6"/><path d="M2493.5,1559 V1574.5 M2498.2,1559 V1574.5 M2502.9,1559 V1574.5" stroke="#606060" stroke-width="1.5"/></svg>
<div style="position:absolute;left:17.00px;top:1546.73px;font-family:'Liberation Sans',sans-serif;font-size:22.40px;line-height:1;white-space:pre;color:#222;font-weight:normal;letter-spacing:0.6px">Address 0x100003f40, Segment __TEXT, _main + 24, Section __text, file offset 0x3f40 - Alt+Double Click to follow link in a new pane</div>
</div>
</body></html>
